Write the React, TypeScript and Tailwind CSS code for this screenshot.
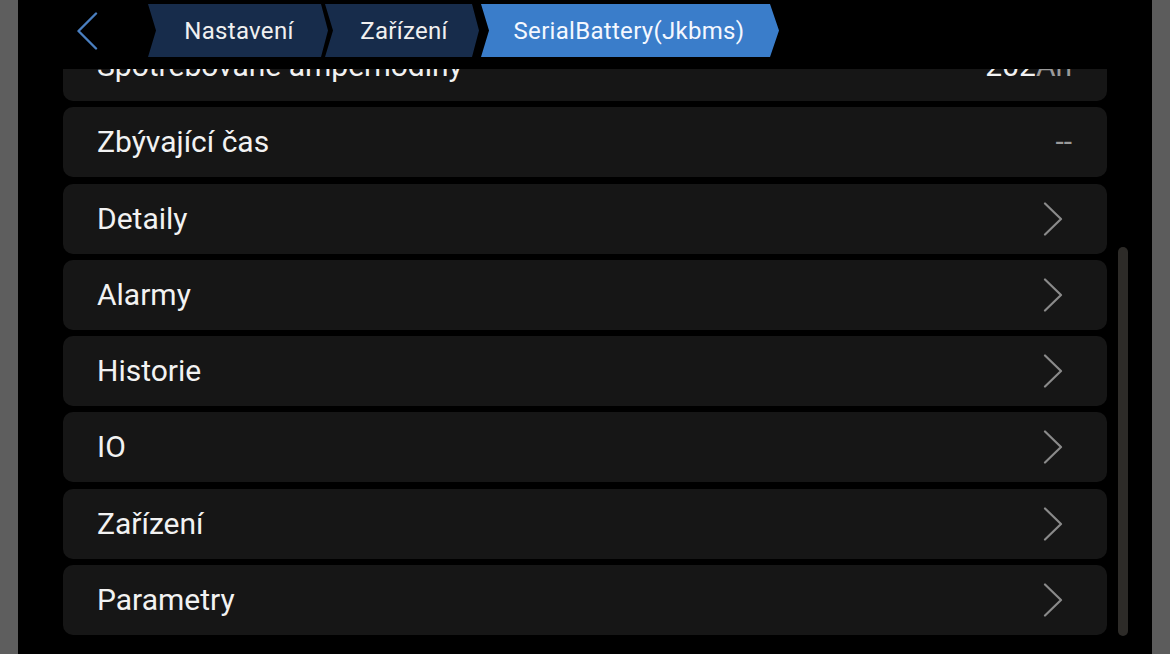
import React from "react";

const Chevron = () => (
  <svg width="20" height="34" viewBox="0 0 20 34" fill="none">
    <path d="M2 1.5 L18 17 L2 32.5" stroke="#8a8a8a" strokeWidth="2.2" strokeLinecap="round" strokeLinejoin="round" />
  </svg>
);

type Row = { label: string; value?: React.ReactNode; nav?: boolean };

const rows: Row[] = [
  {
    label: "Spotřebované ampérhodiny",
    value: (
      <span>
        <span className="text-[#f2f2f2]">202</span>
        <span className="text-[#9a9a9a]">Ah</span>
      </span>
    ),
  },
  { label: "Zbývající čas", value: <span className="text-[#9a9a9a]">--</span> },
  { label: "Detaily", nav: true },
  { label: "Alarmy", nav: true },
  { label: "Historie", nav: true },
  { label: "IO", nav: true },
  { label: "Zařízení", nav: true },
  { label: "Parametry", nav: true },
];

const crumbClip = "polygon(0 0, calc(100% - 7px) 0, 100% 50%, calc(100% - 7px) 100%, 0 100%, 8px 50%)";

export default function App() {
  return (
    <div
      className="w-[1170px] h-[654px] flex bg-black overflow-hidden"
      style={{ fontFamily: "Roboto, 'Noto Sans', sans-serif" }}
    >
      <div className="w-[18px] bg-[#5e5e5e]" />
      <div className="flex-1 relative flex flex-col bg-black">
        <div className="h-[69px] flex items-start shrink-0">
          <div className="ml-[58px] mt-[12px] w-[22px] h-[38px]">
            <svg width="22" height="38" viewBox="0 0 22 38" fill="none">
              <path d="M20 1.5 L2.5 19 L20 36.5" stroke="#4a7fc0" strokeWidth="2.4" strokeLinecap="round" strokeLinejoin="round" />
            </svg>
          </div>
          <div className="flex mt-[4px] ml-[50px] h-[53px]">
            <div
              className="w-[180px] h-[53px] bg-[#172c4b] flex items-center justify-center text-[24px] tracking-[0.3px] text-[#f0f0f0] pl-[2px]"
              style={{ clipPath: crumbClip }}
            >
              Nastavení
            </div>
            <div
              className="ml-[-3px] w-[154px] h-[53px] bg-[#172c4b] flex items-center justify-center text-[24px] tracking-[0.3px] text-[#f0f0f0] pl-[4px]"
              style={{ clipPath: crumbClip }}
            >
              Zařízení
            </div>
            <div
              className="ml-[2px] w-[298px] h-[53px] bg-[#3a7dca] flex items-center justify-center text-[24px] tracking-[0.3px] text-[#f4f8ff] pr-[2px]"
              style={{ clipPath: "polygon(0 0, calc(100% - 9px) 0, 100% 50%, calc(100% - 9px) 100%, 0 100%, 8px 50%)" }}
            >
              SerialBattery(Jkbms)
            </div>
          </div>
        </div>
        <div className="flex-1 overflow-hidden px-[45px]">
          <div className="flex flex-col gap-[6.3px] mt-[-38px]">
            {rows.map((r) => (
              <div
                key={r.label}
                className="h-[70px] shrink-0 rounded-[10px] bg-[#161616] flex items-center justify-between pl-[34px] pr-[35px]"
              >
                <span className="text-[30px] text-[#f2f2f2] leading-none">{r.label}</span>
                {r.nav ? (
                  <span className="mr-[9px] flex items-center">
                    <Chevron />
                  </span>
                ) : (
                  <span className="text-[30px] leading-none">{r.value}</span>
                )}
              </div>
            ))}
          </div>
        </div>
        <div className="absolute left-[1100px] top-[247px] w-[10px] h-[389px] rounded-full bg-[#2d2b28]" />
      </div>
      <div className="w-[18px] bg-[#5c5c5c]" />
    </div>
  );
}
